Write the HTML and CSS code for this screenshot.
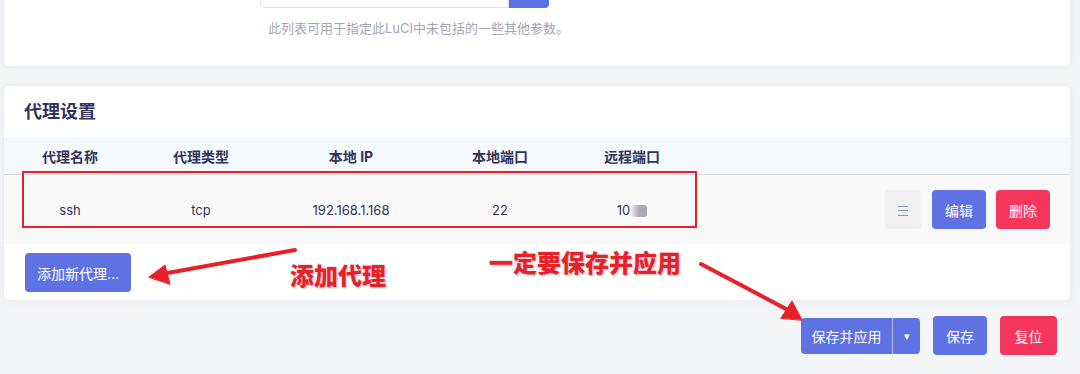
FILE: index.html
```html
<!DOCTYPE html>
<html lang="zh-CN">
<head>
    <meta charset="UTF-8">
    <title>frp 设置</title>
    <link rel="stylesheet" href="styles.css">
</head>
<body>
    <div class="page">
        <div class="card card-top">
            <div class="field">
                <div class="field-input">
                    <input type="text" class="text-input" value="">
                    <button class="btn-add-item"></button>
                </div>
                <div class="field-help">此列表可用于指定此LuCI中未包括的一些其他参数。</div>
            </div>
        </div>

        <div class="card card-proxy">
            <h3 class="card-title">代理设置</h3>
            <div class="table">
                <div class="table-head">
                    <div class="cell">代理名称</div>
                    <div class="cell">代理类型</div>
                    <div class="cell">本地 IP</div>
                    <div class="cell">本地端口</div>
                    <div class="cell">远程端口</div>
                    <div class="cell"></div>
                </div>
                <div class="table-row">
                    <div class="cell">ssh</div>
                    <div class="cell">tcp</div>
                    <div class="cell">192.168.1.168</div>
                    <div class="cell">22</div>
                    <div class="cell">10<span class="blur"></span></div>
                    <div class="cell actions">
                        <button class="btn btn-drag"><span class="bars"></span></button>
                        <button class="btn btn-primary">编辑</button>
                        <button class="btn btn-danger">删除</button>
                    </div>
                </div>
            </div>
            <div class="card-footer">
                <button class="btn btn-primary btn-new">添加新代理...</button>
            </div>
        </div>

        <div class="page-actions">
            <div class="split">
                <button class="split-main">保存并应用</button>
                <button class="split-toggle">&#9662;</button>
            </div>
            <button class="btn btn-primary btn-big">保存</button>
            <button class="btn btn-danger btn-big">复位</button>
        </div>

        <!-- annotations drawn over the screenshot -->
        <div class="mark-box"></div>
        <div class="note note-add">添加代理</div>
        <div class="note note-save">一定要保存并应用</div>
        <svg class="arrows" width="1080" height="374" viewBox="0 0 1080 374">
            <g stroke="#e8202a" stroke-width="4" stroke-linecap="round" fill="#e8202a">
                <line x1="295" y1="250" x2="162" y2="274"/>
                <polygon points="149,277 165,265 170,284" stroke-width="1" stroke-linejoin="round"/>
                <line x1="701" y1="264" x2="788" y2="310"/>
                <polygon points="802,320 792,301 781,318" stroke-width="1" stroke-linejoin="round"/>
            </g>
        </svg>
    </div>
</body>
</html>
```

FILE: styles.css
```css
body {
    margin: 0;
    padding: 0;
    background-color: #f4f5f7;
    font-family: Inter, "Noto Sans CJK SC", sans-serif;
    color: #32325d;
    overflow: hidden;
}
.page {
    position: relative;
    width: 1080px;
    height: 374px;
    overflow: hidden;
}
.card {
    background-color: #fff;
    border-radius: 6px;
    box-shadow: 0 0 8px rgba(136, 152, 170, 0.15);
    margin: 0 10px 0 4px;
    overflow: hidden;
}
.card-top {
    margin-top: -40px;
    padding: 12px 0 29px 256px;
}
.field-input {
    display: flex;
}
.text-input {
    width: 249px;
    height: 36px;
    box-sizing: border-box;
    border: 1px solid #dee2e6;
    border-radius: 4px 0 0 4px;
}
.btn-add-item {
    width: 40px;
    height: 36px;
    border: 0;
    border-radius: 0 4px 4px 0;
    background-color: #5e72e4;
}
.field-help {
    margin-top: 11px;
    padding-left: 8px;
    font-size: 13px;
    line-height: 18px;
    color: #a3a5b3;
}
.card-proxy {
    margin-top: 20px;
}
.card-title {
    margin: 0;
    padding: 14px 20px;
    font-size: 18px;
    line-height: 23px;
    font-weight: bold;
    color: #32325d;
}
.table-head, .table-row {
    display: grid;
    grid-template-columns: 132px 130px 170px 128px 136px 1fr;
    align-items: center;
}
.table-head {
    height: 37px;
    background-color: #f6f9fc;
    border-bottom: 1px solid #dcdcdc;
    font-size: 14px;
    font-weight: bold;
    color: #32325d;
}
.table-row {
    height: 69px;
    background-color: #f9f9f9;
    font-size: 13px;
    color: #32325d;
}
.cell {
    text-align: center;
}
.blur {
    display: inline-block;
    width: 16px;
    height: 12px;
    margin-left: 1px;
    vertical-align: -2px;
    border-radius: 3px;
    background: linear-gradient(90deg, #f0ecee, #b0aab8 50%, #a7a3b4);
}
.actions {
    display: flex;
    justify-content: flex-end;
    gap: 10px;
    padding-right: 20px;
}
.btn {
    border: 0;
    border-radius: 4px;
    color: #fff;
    font-family: inherit;
    font-size: 14px;
    height: 39px;
    width: 54px;
    padding: 0;
    cursor: pointer;
}
.btn-primary {
    background-color: #5e72e4;
}
.btn-danger {
    background-color: #f5365c;
}
.btn-drag {
    width: 36px;
    margin-right: 1px;
    background-color: #f0f0f0;
}
.bars {
    display: inline-block;
    width: 10px;
    height: 8px;
    border-top: 1px solid #8e99a8;
    border-bottom: 1px solid #8e99a8;
    position: relative;
    vertical-align: middle;
}
.bars::after {
    content: "";
    position: absolute;
    left: 0;
    right: 0;
    top: 3px;
    border-top: 1px solid #8e99a8;
}
.card-footer {
    padding: 9px 21px 8px;
}
.btn-new {
    width: 106px;
    font-size: 14px;
}
.page-actions {
    display: flex;
    justify-content: flex-end;
    align-items: center;
    gap: 13px;
    margin-top: 16px;
    padding-right: 23px;
}
.split {
    display: flex;
    height: 36px;
    border-radius: 4px;
    overflow: hidden;
    background-color: #5e72e4;
}
.split-main, .split-toggle {
    border: 0;
    background: transparent;
    color: #fff;
    font-family: inherit;
    font-size: 14px;
    padding: 0;
}
.split-main {
    width: 92px;
    border-right: 1px solid #b9c0ea;
}
.split-toggle {
    width: 27px;
    font-size: 11px;
}
.btn-big {
    height: 39px;
}
.btn-big.btn-danger {
    width: 57px;
}
.mark-box {
    position: absolute;
    left: 22px;
    top: 171px;
    width: 671px;
    height: 53px;
    border: 2px solid #e8202a;
}
.note {
    position: absolute;
    font-size: 24px;
    font-weight: 900;
    color: #e8202a;
    line-height: 30px;
    text-shadow: 0 0 2px #fff, 1px 1px 2px #b5b5b5, -1px -1px 1px #ddd;
}
.note-add {
    left: 290px;
    top: 262px;
}
.note-save {
    left: 489px;
    top: 249px;
}
.arrows {
    position: absolute;
    left: 0;
    top: 0;
    pointer-events: none;
}
```
